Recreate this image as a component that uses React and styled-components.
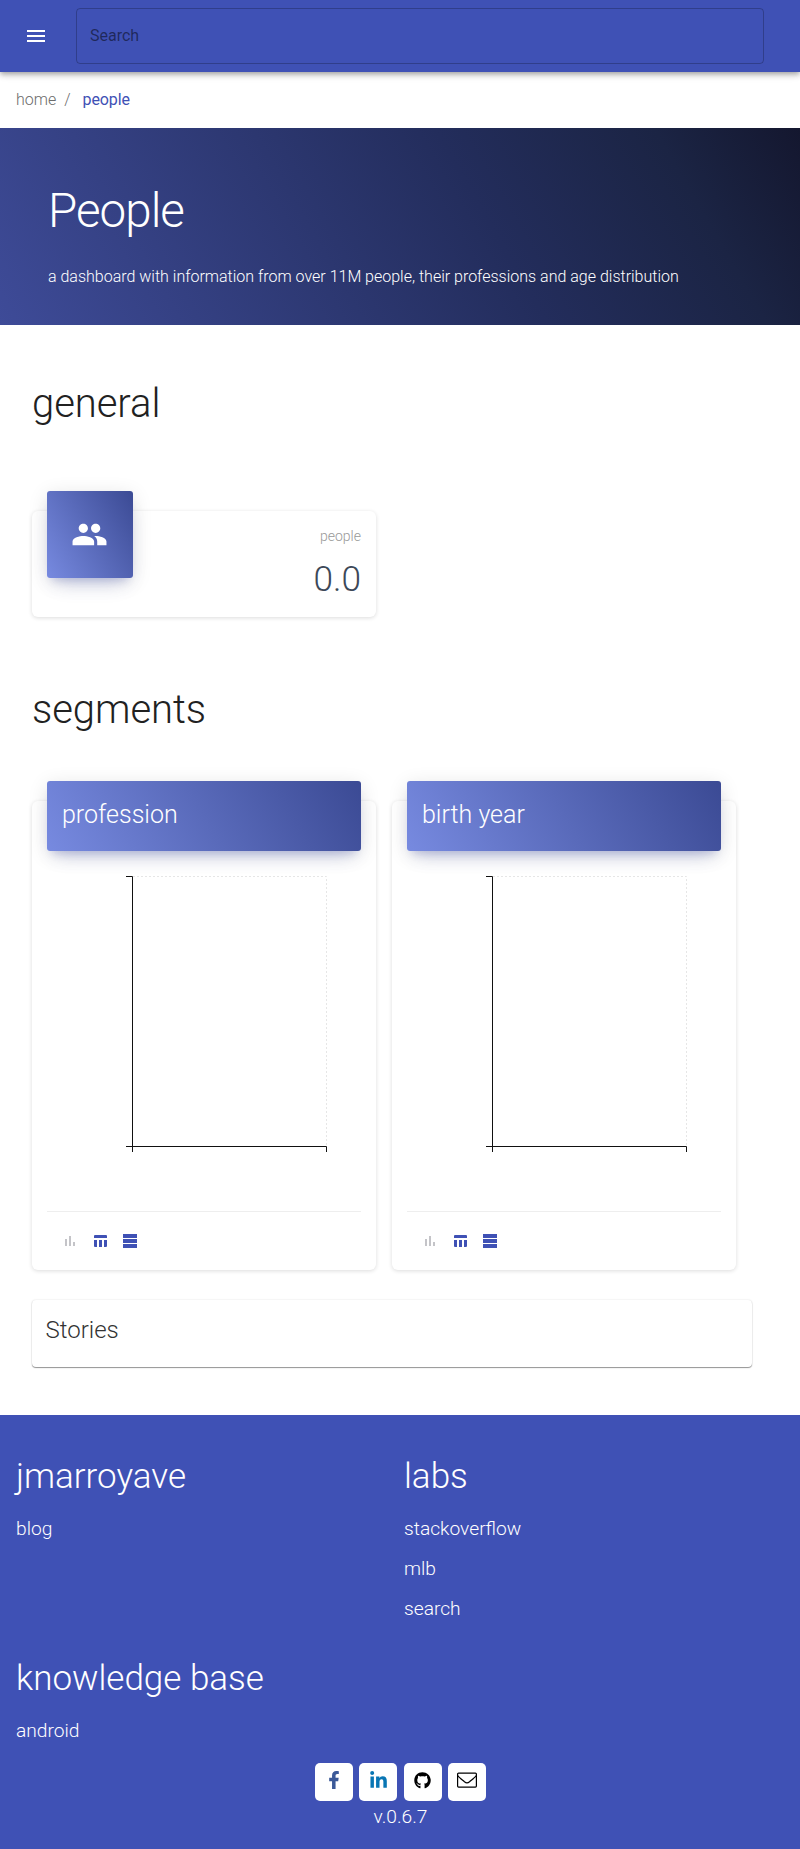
import React from 'react';
import styled, { createGlobalStyle } from 'styled-components';
import { MdMenu, MdPeople } from 'react-icons/md';
import { FaFacebookF, FaLinkedinIn, FaGithub } from 'react-icons/fa';

const Global = createGlobalStyle`
  * { box-sizing: border-box; }
  body { margin: 0; background: #fff; font-family: Roboto, sans-serif; font-weight: 300; color: #212121; }
  h1, h2, h3, p { margin: 0; font-weight: 300; }
  a { color: inherit; text-decoration: none; }
`;

const AppBar = styled.header`
  position: relative;
  display: flex;
  align-items: center;
  height: 72px;
  padding: 0 36px 0 24px;
  background: #3f51b5;
  box-shadow: 0 2px 4px -1px rgba(0,0,0,.2), 0 4px 5px 0 rgba(0,0,0,.14), 0 1px 10px 0 rgba(0,0,0,.12);
`;
const MenuButton = styled.button`
  display: flex;
  padding: 0;
  margin-right: 28px;
  border: 0;
  background: none;
  color: #fff;
  font-size: 24px;
`;
const SearchField = styled.input`
  flex: 1;
  height: 56px;
  padding: 0 13px 2px;
  border: 1px solid rgba(0,0,0,.23);
  border-radius: 4px;
  background: transparent;
  font: 400 16px Roboto, sans-serif;
  &::placeholder { color: rgba(0,0,0,.5); opacity: 1; }
`;
const Breadcrumb = styled.nav`
  display: flex;
  height: 56px;
  padding: 0 16px 2px;
  align-items: center;
  font-size: 16px;
  color: #6c6c6c;
`;
const Separator = styled.span`
  margin: 0 12px 0 8px;
`;
const Current = styled.span`
  color: #3f51b5;
  font-weight: 400;
  letter-spacing: -0.1px;
`;
const Hero = styled.section`
  height: 197px;
  padding: 53px 48px 0;
  background: linear-gradient(60deg, #3e4b98 0%, #232d5c 60%, #1b2444 84%, #14172f 100%);
  color: #fff;
`;
const HeroTitle = styled.h1`
  font-size: 47.5px;
  line-height: 60px;
  letter-spacing: -0.96px;
`;
const HeroText = styled.p`
  margin-top: 24px;
  font-size: 16px;
  line-height: 24px;
`;
const Main = styled.main`
  height: 1090px;
  padding: 49px 48px 0 32px;
`;
const SectionTitle = styled.h2`
  margin-top: ${p => p.$before || 0}px;
  margin-bottom: ${p => p.$after}px;
  font-size: 40px;
  line-height: 60px;
  letter-spacing: -0.05px;
`;
const Card = styled.article`
  width: 344px;
  padding: 0 15px;
  border-radius: 6px;
  background: #fff;
  box-shadow: 0 1px 4px 0 rgba(0,0,0,.14);
`;
const StatCard = styled(Card)`
  display: flex;
  justify-content: space-between;
  height: 106px;
`;
const headerShadow = '0 12px 20px -10px rgba(63,81,181,.28), 0 4px 20px 0 rgba(0,0,0,.12), 0 7px 8px -5px rgba(63,81,181,.2)';
const IconTile = styled.div`
  display: flex;
  align-items: center;
  justify-content: center;
  width: 86px;
  height: 87px;
  margin-top: -20px;
  padding: 0 1px 1px 0;
  border-radius: 3px;
  background: linear-gradient(60deg, #778ae0, #3b4a94);
  box-shadow: ${headerShadow};
  color: #fff;
  font-size: 37px;
`;
const Stat = styled.div`
  padding-top: 15px;
  text-align: right;
`;
const StatLabel = styled.p`
  font-size: 14px;
  line-height: 21px;
  color: #999;
`;
const StatValue = styled.p`
  margin-top: 6px;
  font-size: 35.2px;
  line-height: 52px;
  color: #3c4858;
`;
const SegmentRow = styled.div`
  display: flex;
  gap: 16px;
`;
const SegmentCard = styled(Card)`
  height: 469px;
`;
const SegmentHeader = styled.h3`
  height: 70px;
  margin-top: -20px;
  padding: 16px 15px;
  border-radius: 3px;
  background: linear-gradient(60deg, #778ae0, #3b4a94);
  box-shadow: ${headerShadow};
  color: #fff;
  font-size: 25px;
  line-height: 36px;
`;
const Chart = styled.svg`
  display: block;
  width: 314px;
  height: 360px;
`;
const SegmentActions = styled.div`
  display: flex;
  gap: 8px;
  padding: 19px 12px;
  border-top: 1px solid #eee;
`;
const ActionIcon = styled.svg`
  width: 22px;
  height: 22px;
  fill: ${p => (p.$muted ? '#c4c4c8' : '#3f51b5')};
`;
const Stories = styled.section`
  height: 67px;
  margin-top: 30px;
  padding: 13px 13.5px;
  border-radius: 4px;
  background: #fff;
  box-shadow: 0 1px 1px rgba(0,0,0,.4), 0 0 2px rgba(0,0,0,.14);
  color: #333;
  font-size: 24px;
  line-height: 34px;
`;
const Footer = styled.footer`
  height: 434px;
  padding: 0 15px 0 16px;
  background: #3f51b5;
  color: #fff;
`;
const FooterGrid = styled.div`
  display: grid;
  grid-template-columns: 388px 1fr;
  grid-template-rows: 202px 146px;
`;
const FooterTitle = styled.h3`
  padding-top: 37px;
  font-size: 35px;
  line-height: 50px;
`;
const FooterLink = styled.a`
  display: block;
  margin-top: ${p => (p.$first ? 7 : 0)}px;
  font-size: 19.2px;
  line-height: 40px;
`;
const SocialRow = styled.div`
  display: flex;
  justify-content: center;
  gap: 6.3px;
`;
const SocialButton = styled.a`
  display: flex;
  align-items: center;
  justify-content: center;
  width: 38px;
  height: 38px;
  padding-bottom: 4px;
  border-radius: 5px;
  background: #fff;
  color: ${p => p.$color};
  font-size: ${p => p.$size || 18}px;
`;
const Version = styled.p`
  margin-top: 1px;
  text-align: center;
  font-size: 19.2px;
  line-height: 30px;
`;

function SegmentPanel({ title }) {
  return (
    <SegmentCard>
      <SegmentHeader>{title}</SegmentHeader>
      <Chart viewBox="0 0 314 360" fill="none">
        <path d="M86 25.5H279.5V295" stroke="#e6e6e6" strokeDasharray="2 2" />
        <path d="M79 25.5H85.5V301M79 295.5H279.5V301" stroke="#111" />
      </Chart>
      <SegmentActions>
        <ActionIcon $muted viewBox="0 0 22 22">
          <path d="M6 8h2v7H6zM10 5h2v10h-2zM14 11h2v4h-2z" />
        </ActionIcon>
        <ActionIcon viewBox="0 0 22 22">
          <path d="M6 4h11a1 1 0 0 1 1 1v2H5V5a1 1 0 0 1 1-1zM5 9h3v7H6a1 1 0 0 1-1-1zM10 9h3v7h-3zM15 9h3v6a1 1 0 0 1-1 1h-2z" />
        </ActionIcon>
        <ActionIcon viewBox="0 0 22 22">
          <path d="M4 3h14v4H4zM4 8h14v4H4zM4 13h14v4H4z" />
        </ActionIcon>
      </SegmentActions>
    </SegmentCard>
  );
}

export default function App() {
  return (
    <>
      <Global />
      <AppBar>
        <MenuButton aria-label="menu"><MdMenu /></MenuButton>
        <SearchField placeholder="Search" />
      </AppBar>
      <Breadcrumb>
        <a>home</a><Separator>/</Separator><Current>people</Current>
      </Breadcrumb>
      <Hero>
        <HeroTitle>People</HeroTitle>
        <HeroText>a dashboard with information from over 11M people, their professions and age distribution</HeroText>
      </Hero>
      <Main>
        <SectionTitle $after={77}>general</SectionTitle>
        <StatCard>
          <IconTile><MdPeople /></IconTile>
          <Stat>
            <StatLabel>people</StatLabel>
            <StatValue>0.0</StatValue>
          </Stat>
        </StatCard>
        <SectionTitle $before={63} $after={61}>segments</SectionTitle>
        <SegmentRow>
          <SegmentPanel title="profession" />
          <SegmentPanel title="birth year" />
        </SegmentRow>
        <Stories>Stories</Stories>
      </Main>
      <Footer>
        <FooterGrid>
          <div>
            <FooterTitle>jmarroyave</FooterTitle>
            <FooterLink $first>blog</FooterLink>
          </div>
          <div>
            <FooterTitle>labs</FooterTitle>
            <FooterLink $first>stackoverflow</FooterLink>
            <FooterLink>mlb</FooterLink>
            <FooterLink>search</FooterLink>
          </div>
          <div>
            <FooterTitle>knowledge base</FooterTitle>
            <FooterLink $first>android</FooterLink>
          </div>
        </FooterGrid>
        <SocialRow>
          <SocialButton $color="#3b5998"><FaFacebookF /></SocialButton>
          <SocialButton $color="#0976b4" $size={19}><FaLinkedinIn /></SocialButton>
          <SocialButton $color="#000" $size={17}><FaGithub /></SocialButton>
          <SocialButton $color="#000">
            <svg width="20" height="16" viewBox="0 0 20 16" fill="none" stroke="currentColor" strokeWidth="1.2">
              <rect x=".6" y="1.1" width="18.8" height="14" rx="1" />
              <path d="M.6 3.5C2 5.5 5.500 8 7.500 9.800c2 1.700 3 1.700 5 0C14.500 8 18 5.500 19.400 3.500" />
            </svg>
          </SocialButton>
        </SocialRow>
        <Version>v.0.6.7</Version>
      </Footer>
    </>
  );
}
